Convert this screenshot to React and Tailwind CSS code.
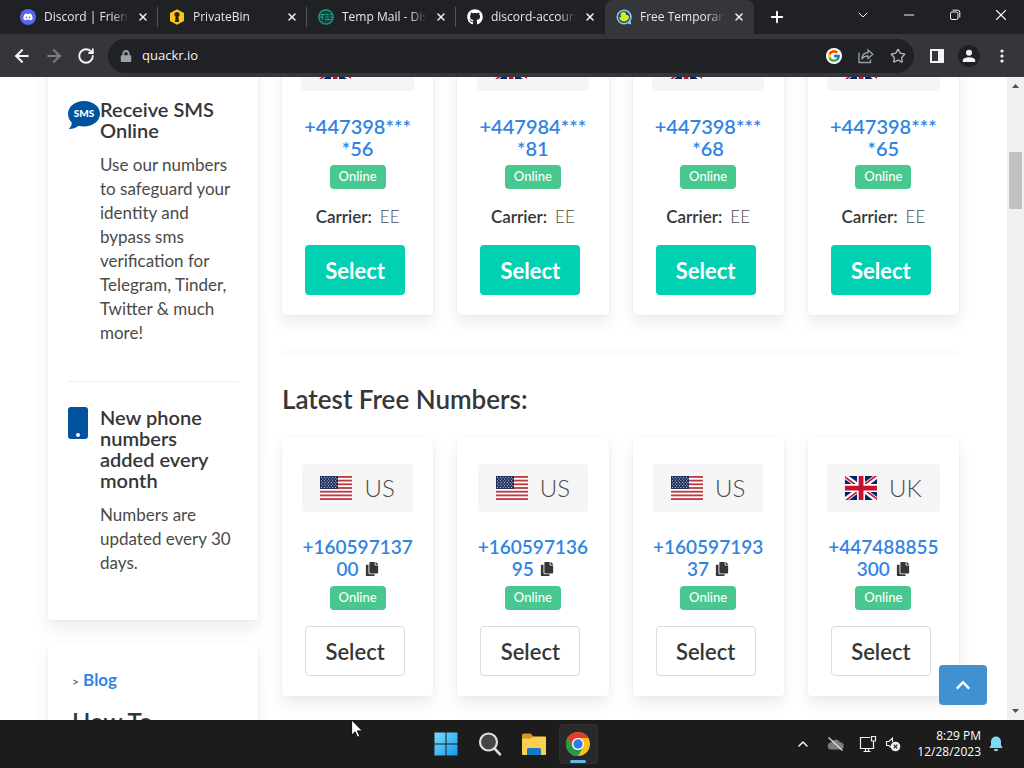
import React from "react";
import {
  ArrowLeft, ArrowRight, RotateCw, X, Plus, ChevronDown, ChevronUp, Minus, Star,
} from "lucide-react";
import { FaDiscord, FaGithub, FaCopy, FaChevronUp, FaLock } from "react-icons/fa";
import { FcGoogle } from "react-icons/fc";

const tabs = [
  { title: "Discord | Friends", icon: <DiscordIcon /> },
  { title: "PrivateBin", icon: <PrivateBinIcon /> },
  { title: "Temp Mail - Disposable", icon: <TempMailIcon /> },
  { title: "discord-account-gen", icon: <FaGithub className="size-4 shrink-0 text-white" /> },
  { title: "Free Temporary Phone", icon: <QuackrIcon />, active: true },
];

const popular = [
  { country: "UK", line1: "+447398***", line2: "*56", carrier: "EE" },
  { country: "UK", line1: "+447984***", line2: "*81", carrier: "EE" },
  { country: "UK", line1: "+447398***", line2: "*68", carrier: "EE" },
  { country: "UK", line1: "+447398***", line2: "*65", carrier: "EE" },
];

const latest = [
  { country: "US", line1: "+160597137", line2: "00" },
  { country: "US", line1: "+160597136", line2: "95" },
  { country: "US", line1: "+160597193", line2: "37" },
  { country: "UK", line1: "+447488855", line2: "300" },
];

function DiscordIcon() {
  return (
    <span className="flex size-4 shrink-0 items-center justify-center rounded-full bg-[#5865f2]">
      <FaDiscord className="size-2.5 text-white" />
    </span>
  );
}

function PrivateBinIcon() {
  return (
    <svg viewBox="0 0 16 16" className="size-4 shrink-0">
      <path d="M8 0.3 15 4v8l-7 3.7L1 12V4z" fill="#fbc617" />
      <path d="M8 3a2.6 2.6 0 0 1 1.4 4.8L10 13H6l.6-5.2A2.6 2.6 0 0 1 8 3z" fill="#2b2410" />
    </svg>
  );
}

function TempMailIcon() {
  return (
    <svg viewBox="0 0 16 16" className="size-4 shrink-0" fill="none" stroke="#1fa88b">
      <circle cx="8" cy="8" r="7.2" fill="#17433f" strokeWidth="1.2" />
      <path d="M2.5 5.5h4M4.5 5.5v5M7.5 5.5h3M7.5 8h3M7.5 10.5h6M11.5 5.5h2M12.5 8h2M2 8h2" />
    </svg>
  );
}

function QuackrIcon() {
  return (
    <svg viewBox="0 0 16 16" className="size-4 shrink-0">
      <path d="M8 0.4a7.5 7.5 0 1 0 3.4 14.2l3.8.9-.6-3.8A7.5 7.5 0 0 0 8 .4z" fill="#8cc8f2" />
      <circle cx="8" cy="8" r="6.1" fill="#264a5c" />
      <path d="M7.400 3c2 0 3 1.400 2.700 3.100 1.500 0 2.600.6 2.900 1.500-.1 2.900-2 4.800-5 4.800-2.800 0-4.700-1.700-5-4.300.8.3 1.700.2 2.200-.2-.5-.7-.7-1.500-.6-2.300.1-1.500 1.200-2.600 2.800-2.600z" fill="#d5ee22" />
    </svg>
  );
}

function Tab({ tab, divider }) {
  return (
    <div
      className={
        tab.active
          ? "flex w-[149px] min-w-0 items-center rounded-t-lg bg-[#35363a] pl-[11px]"
          : "flex w-[149px] min-w-0 items-center pl-[11px]"
      }
    >
      {tab.icon}
      <span className="ml-2 min-w-0 flex-1 overflow-hidden whitespace-nowrap text-xs text-gray-200 mask-r-from-80% mask-r-to-100%">
        {tab.title}
      </span>
      <button aria-label={"Close " + tab.title} className="mr-2 ml-2 text-gray-100">
        <X className="size-3" strokeWidth={3} />
      </button>
      <span className={divider ? "h-5 w-px bg-[#54565a]" : "h-5 w-px"} />
    </div>
  );
}

function BrowserBar() {
  return (
    <header className="shrink-0 bg-[#35363a] font-['Open_Sans',sans-serif]">
      <div className="flex h-[34px] bg-[#202124] pl-[9px]">
        {tabs.map((t, i) => (
          <Tab key={t.title} tab={t} divider={i < 3} />
        ))}
        <button aria-label="New tab" className="px-3.5 text-white">
          <Plus className="size-[18px]" strokeWidth={2.5} />
        </button>
        <div className="ml-auto flex h-[29px] text-gray-100">
          <button aria-label="Search tabs" className="flex w-[46px] items-center justify-center">
            <ChevronDown className="size-4" strokeWidth={1.5} />
          </button>
          <button aria-label="Minimize" className="flex w-[46px] items-center justify-center">
            <Minus className="size-4" strokeWidth={1.5} />
          </button>
          <button aria-label="Restore" className="flex w-[46px] items-center justify-center">
            <svg viewBox="0 0 12 12" className="size-3" fill="none" stroke="currentColor">
              <rect x="1.500" y="3" width="7.500" height="7.500" rx="1.500" />
              <path d="M3.500 1.200h5a2.300 2.300 0 0 1 2.300 2.300v5" />
            </svg>
          </button>
          <button aria-label="Close window" className="flex w-[46px] items-center justify-center">
            <X className="size-[18px]" strokeWidth={1.5} />
          </button>
        </div>
      </div>
      <div className="flex h-[43px] items-center pr-3.5 pl-3">
        <button aria-label="Back" className="mr-3 text-gray-100">
          <ArrowLeft className="size-5" strokeWidth={2.5} />
        </button>
        <button aria-label="Forward" className="mr-3 text-[#7c7d80]">
          <ArrowRight className="size-5" strokeWidth={2.5} />
        </button>
        <button aria-label="Reload" className="mr-3 px-px text-gray-100">
          <RotateCw className="size-[18px]" strokeWidth={2.5} />
        </button>
        <div className="flex h-[34px] min-w-0 flex-1 items-center rounded-full bg-[#202124] pr-2 pl-3">
          <FaLock className="size-3 text-[#9aa0a6]" />
          <input
            aria-label="Address"
            defaultValue="quackr.io"
            className="ml-2.5 min-w-0 flex-1 bg-transparent text-[13px] text-gray-100 outline-none"
          />
          <button aria-label="Google" className="flex size-4 items-center justify-center rounded-full bg-white">
            <FcGoogle className="size-3.5" />
          </button>
          <button aria-label="Share" className="ml-4 text-[#9aa0a6]">
            <svg viewBox="0 0 16 16" className="size-4" fill="none" stroke="currentColor" strokeWidth="1.300">
              <path d="M1 4.500V14.500H12.500V11.500" />
              <path d="M10 2l4.800 4.300L10 10.500V8C7 8 5 9 3.800 11.300 4 7.500 6 4.800 10 4.500z" />
            </svg>
          </button>
          <button aria-label="Bookmark" className="ml-4 text-[#b5b8bc]">
            <Star className="size-4" strokeWidth={2} />
          </button>
        </div>
        <button aria-label="Side panel" className="ml-4 text-gray-100">
          <svg viewBox="0 0 14 14" className="size-3.5">
            <path d="M0 0h14v14H0zM2 2v10h6V2z" fill="currentColor" fillRule="evenodd" />
          </svg>
        </button>
        <button aria-label="Profile" className="ml-3.5 flex size-[22px] items-center justify-center rounded-full bg-[#202124] text-gray-100">
          <svg viewBox="0 0 14 14" className="size-3.5" fill="currentColor">
            <circle cx="7" cy="3.800" r="3" />
            <path d="M.8 13V11.500C.8 9.300 4 8.300 7 8.300s6.200 1 6.200 3.200V13z" />
          </svg>
        </button>
        <button aria-label="Menu" className="ml-3.5 text-gray-100">
          <svg viewBox="0 0 16 16" className="size-4" fill="currentColor">
            <circle cx="8" cy="3" r="1.600" />
            <circle cx="8" cy="8" r="1.600" />
            <circle cx="8" cy="13" r="1.600" />
          </svg>
        </button>
      </div>
    </header>
  );
}

function Flag({ country }) {
  if (country === "US") {
    return (
      <svg viewBox="0 0 32 24" className="h-6 w-8">
        <rect width="32" height="24" fill="#fff" />
        {[0, 1, 2, 3, 4, 5, 6].map((n) => (
          <rect key={n} y={(n * 48) / 13} width="32" height={24 / 13} fill="#bd3d44" />
        ))}
        <rect width="18" height="12.900" fill="#192f5d" />
        {[0, 1, 2, 3, 4, 5, 6].map((r) =>
          [0, 1, 2, 3, 4, 5].map((c) => (
            <circle key={r + "-" + c} cx={1.5 + c * 2.8 + (r % 2 ? 1.4 : 0)} cy={1.3 + r * 1.7} r=".5" fill="#fff" />
          ))
        )}
      </svg>
    );
  }
  return (
    <svg viewBox="0 0 640 480" className="h-6 w-8">
      <path fill="#012169" d="M0 0h640v480H0z" />
      <path fill="#fff" d="m75 0 244 181L562 0h78v62L400 241l240 178v61h-80L320 301 81 480H0v-60l239-178L0 64V0z" />
      <path fill="#c8102e" d="m424 281 216 159v40L369 281zm-184 20 6 35L54 480H0zM640 0v3L391 191l2-44L590 0zM0 0l239 176h-60L0 42z" />
      <path fill="#fff" d="M241 0v480h160V0zM0 160v160h640V160z" />
      <path fill="#c8102e" d="M0 193v96h640v-96zM273 0v480h96V0z" />
    </svg>
  );
}

function NumberCard({ item }) {
  return (
    <div className="flex flex-col items-center rounded-sm bg-white pt-7 pb-5 shadow-[0_8px_16px_rgba(10,10,10,0.08),0_0_0_1px_rgba(10,10,10,0.02)]">
      <div className="flex h-12 items-center gap-3 rounded bg-[#f5f5f5] px-[18px] text-2xl font-light text-[#4a4a4a]">
        <Flag country={item.country} />
        {item.country}
      </div>
      <div
        className={
          item.carrier
            ? "mt-6 text-center text-xl leading-[22px] font-semibold"
            : "mt-6 text-center text-[19px] leading-[22px] font-semibold"
        }
      >
        <a href="#number" className="text-[#3085e4]">
          {item.line1}
          <br />
          {item.line2}
        </a>
        {!item.carrier && (
          <button aria-label="Copy number" className="ml-1.5 text-[#363636]">
            <FaCopy className="size-3.5" />
          </button>
        )}
      </div>
      <span className="mt-1.5 flex h-6 items-center rounded bg-[#48c78e] px-[9px] text-[13px] font-medium text-white">
        Online
      </span>
      {item.carrier && (
        <p className="mt-4 text-[17px] leading-6 font-light text-[#4a4a4a]">
          <b className="mr-2 font-semibold text-[#363636]">Carrier:</b>
          {item.carrier}
        </p>
      )}
      <button
        className={
          item.carrier
            ? "mt-4 mr-[5px] h-[50px] w-[100px] rounded bg-[#00d1b2] text-[22px] font-bold text-white"
            : "mt-4 mr-[5px] h-[50px] w-[100px] rounded border border-[#dbdbdb] bg-white text-[22px] font-semibold text-[#363636]"
        }
      >
        Select
      </button>
    </div>
  );
}

function Sidebar() {
  return (
    <aside className="flex flex-col gap-6">
      <div className="rounded-sm bg-white px-5 pt-[84px] pb-[45px] shadow-[0_8px_16px_rgba(10,10,10,0.08),0_0_0_1px_rgba(10,10,10,0.02)]">
        <section className="flex border-b border-[#eeeeee] pb-9">
          <div className="w-8 shrink-0 pt-px">
            <svg viewBox="0 0 32 30" className="w-8">
              <path d="M16 1c9 0 16 5.600 16 12.800S25 26.500 16 26.500c-2 0-3.800-.2-5.500-.8C8 27.800 4.500 29 .8 29c1.800-1.800 3-4 3-6.200C1.400 20.300 0 17.300 0 13.800 0 6.600 7 1 16 1z" fill="#00539f" />
              <text x="16" y="17" textAnchor="middle" fontSize="10" fontWeight="900" fill="#fff">
                SMS
              </text>
            </svg>
          </div>
          <div>
            <h2 className="text-xl leading-[21px] font-semibold text-[#363636]">
              Receive SMS
              <br />
              Online
            </h2>
            <p className="mt-3 text-[17px] leading-6 text-[#4a4a4a]">
              Use our numbers
              <br />
              to safeguard your
              <br />
              identity and
              <br />
              bypass sms
              <br />
              verification for
              <br />
              Telegram, Tinder,
              <br />
              Twitter &amp; much
              <br />
              more!
            </p>
          </div>
        </section>
        <section className="flex pt-[25px]">
          <div className="w-8 shrink-0">
            <svg viewBox="0 0 20 32" className="w-5">
              <rect width="20" height="32" rx="3" fill="#00539f" />
              <circle cx="10" cy="28" r="2" fill="#fff" />
            </svg>
          </div>
          <div>
            <h2 className="text-xl leading-[21px] font-semibold text-[#363636]">
              New phone
              <br />
              numbers
              <br />
              added every
              <br />
              month
            </h2>
            <p className="mt-3 text-[17px] leading-6 text-[#4a4a4a]">
              Numbers are
              <br />
              updated every 30
              <br />
              days.
            </p>
          </div>
        </section>
      </div>
      <div className="rounded-sm bg-white px-6 pt-6 pb-6 shadow-[0_8px_16px_rgba(10,10,10,0.08),0_0_0_1px_rgba(10,10,10,0.02)]">
        <p className="leading-6 text-[#4a4a4a]">
          <span className="text-xs">&gt;</span>{" "}
          <a href="#blog" className="text-[17px] font-bold text-[#3085e4]">
            Blog
          </a>
        </p>
        <h2 className="mt-4 text-2xl leading-7 font-semibold text-[#363636]">How To</h2>
      </div>
    </aside>
  );
}

function ScrollBar() {
  return (
    <div className="flex w-[17px] shrink-0 flex-col items-center bg-[#f1f1f1]">
      <svg viewBox="0 0 17 17" className="size-[17px]">
        <path d="M5 11l3.500-4L12 11z" fill="#505050" />
      </svg>
      <div className="mt-[58px] h-[57px] w-[13px] bg-[#c1c1c1]" />
      <svg viewBox="0 0 17 17" className="mt-auto size-[17px]">
        <path d="M5 6l3.500 4L12 6z" fill="#505050" />
      </svg>
    </div>
  );
}

function ChromeIcon() {
  return (
    <svg viewBox="0 0 24 24" className="size-6 shrink-0">
      <circle cx="12" cy="12" r="12" fill="#fbc116" />
      <path d="M1.600 6A12 12 0 0 1 22.400 6H12a6 6 0 0 0-5.200 9z" fill="#e33b2e" />
      <path d="M1.600 6A12 12 0 0 0 12 24l5.200-9A6 6 0 0 1 6.800 15z" fill="#229a48" />
      <circle cx="12" cy="12" r="6" fill="#fff" />
      <circle cx="12" cy="12" r="4.700" fill="#3079e8" />
    </svg>
  );
}

function Taskbar() {
  return (
    <footer className="grid h-12 shrink-0 grid-cols-[1fr_auto_1fr] bg-[#1c1c1c] font-['Open_Sans',sans-serif] text-white">
      <div />
      <div className="flex items-center">
        <button aria-label="Start" className="flex w-11 justify-center">
          <svg viewBox="0 0 24 24" className="size-6">
            <defs>
              <linearGradient id="win" x1="0" y1="0" x2="1" y2="1">
                <stop offset="0" stopColor="#7ddcfb" />
                <stop offset="1" stopColor="#109ae8" />
              </linearGradient>
            </defs>
            <path d="M.5.500h11v11H.5zM12.500.500h11v11h-11zM.5 12.500h11v11H.5zM12.500 12.500h11v11h-11z" fill="url(#win)" />
          </svg>
        </button>
        <button aria-label="Search" className="flex w-11 justify-center">
          <svg viewBox="0 0 24 24" className="size-6" stroke="#e0e0e0" strokeLinecap="round">
            <circle cx="10.500" cy="10" r="8.500" fill="#454545" strokeWidth="2.200" />
            <path d="M17 17l5 5.300" strokeWidth="2.600" />
          </svg>
        </button>
        <button aria-label="File Explorer" className="flex w-11 justify-center">
          <svg viewBox="0 0 26 24" className="h-6 w-[26px]">
            <path d="M1 3a1.500 1.500 0 0 1 1.500-1.500h7L12 4V9H1z" fill="#d39a1c" />
            <path d="M1 6.500h9l2-2h12a1 1 0 0 1 1 1V22a1 1 0 0 1-1 1H2a1 1 0 0 1-1-1z" fill="#fbd04e" />
            <path d="M6 23v-5.500A1.500 1.500 0 0 1 7.500 16h11a1.500 1.500 0 0 1 1.500 1.500V23z" fill="#1878c4" />
          </svg>
        </button>
        <div className="flex w-11 justify-center">
          <button aria-label="Google Chrome" className="flex h-10 w-[39px] flex-col items-center rounded border border-[#303030] bg-[#292929] pt-[7px]">
            <ChromeIcon />
            <span className="mt-1 h-[3px] w-4 shrink-0 rounded-full bg-[#5fb8ea]" />
          </button>
        </div>
      </div>
      <div className="flex items-center justify-end pr-[21px]">
        <ChevronUp className="size-4" strokeWidth={2} />
        <svg viewBox="0 0 18 16" className="ml-4 h-4 w-[18px]">
          <path d="M4.500 13.500a3.500 3.500 0 0 1-.4-7A5 5 0 0 1 13 6.200a3.700 3.700 0 0 1 .8 7.300z" fill="#7d7d7d" />
          <path d="M1.500 1.500l14 13" stroke="#e0e0e0" strokeWidth="1.200" />
        </svg>
        <svg viewBox="0 0 18 18" className="ml-3.5 size-[18px]" fill="none" stroke="#f0f0f0" strokeWidth="1.200">
          <path d="M11 2.500H1.500v11h13V8M4.500 16.500h7M6.500 13.500v3M9.500 13.500v3" />
          <path d="M12.500 1.500h4V6h-4zM14.500 6v2.500" />
        </svg>
        <svg viewBox="0 0 16 16" className="ml-2 size-4" fill="none" stroke="#f0f0f0" strokeWidth="1.100">
          <path d="M6 11.500L4 9.500H1.500v-4H4L7.500 2v4" />
          <circle cx="10.500" cy="10.500" r="4.800" fill="#f0f0f0" stroke="none" />
          <path d="M8.700 8.700l3.600 3.600M12.300 8.700l-3.600 3.600" stroke="#1c1c1c" />
        </svg>
        <div className="ml-4 text-right text-[12px] leading-4">
          <div>8:29 PM</div>
          <div>12/28/2023</div>
        </div>
        <svg viewBox="0 0 14 16" className="ml-2 h-4 w-3.5" fill="#7fd9f2">
          <path d="M7 .500a5 5 0 0 1 5 5V9l1.600 3H.4L2 9V5.500a5 5 0 0 1 5-5zM4.800 13h4.400A2.200 2.200 0 0 1 4.800 13z" />
        </svg>
      </div>
    </footer>
  );
}

export default function App() {
  return (
    <div className="relative flex h-screen flex-col overflow-hidden bg-white">
      <BrowserBar />
      <div className="relative flex min-h-0 flex-1 font-[Lato,sans-serif]">
        <div className="min-w-0 flex-1 overflow-hidden">
          {/* page is scrolled part of the way down */}
          <div className="-mt-[62px] grid grid-cols-[210px_1fr] gap-6 px-12">
            <Sidebar />
            <main>
              <div className="grid grid-cols-4 gap-6">
                {popular.map((p, i) => (
                  <NumberCard key={i} item={p} />
                ))}
              </div>
              <hr className="mt-9 h-1 border-0 bg-[#fafafa]" />
              <h1 className="mt-7 text-[26px] leading-8 font-semibold text-[#363636]">Latest Free Numbers:</h1>
              <div className="mt-[21px] grid grid-cols-4 gap-6">
                {latest.map((p, i) => (
                  <NumberCard key={i} item={p} />
                ))}
              </div>
            </main>
          </div>
        </div>
        <ScrollBar />
        <button
          aria-label="Back to top"
          className="absolute right-[37px] bottom-[15px] flex h-10 w-12 items-center justify-center rounded bg-[#4190d0] text-white"
        >
          <FaChevronUp className="size-4" />
        </button>
      </div>
      <Taskbar />
      <svg viewBox="0 0 12 19" className="absolute top-[719px] left-[351px] h-[19px] w-3">
        <path d="M.6 1v15.200l3.500-3.400 2.400 5.400 2.300-1-2.400-5.300h5z" fill="#fff" stroke="#000" strokeWidth=".9" />
      </svg>
    </div>
  );
}
